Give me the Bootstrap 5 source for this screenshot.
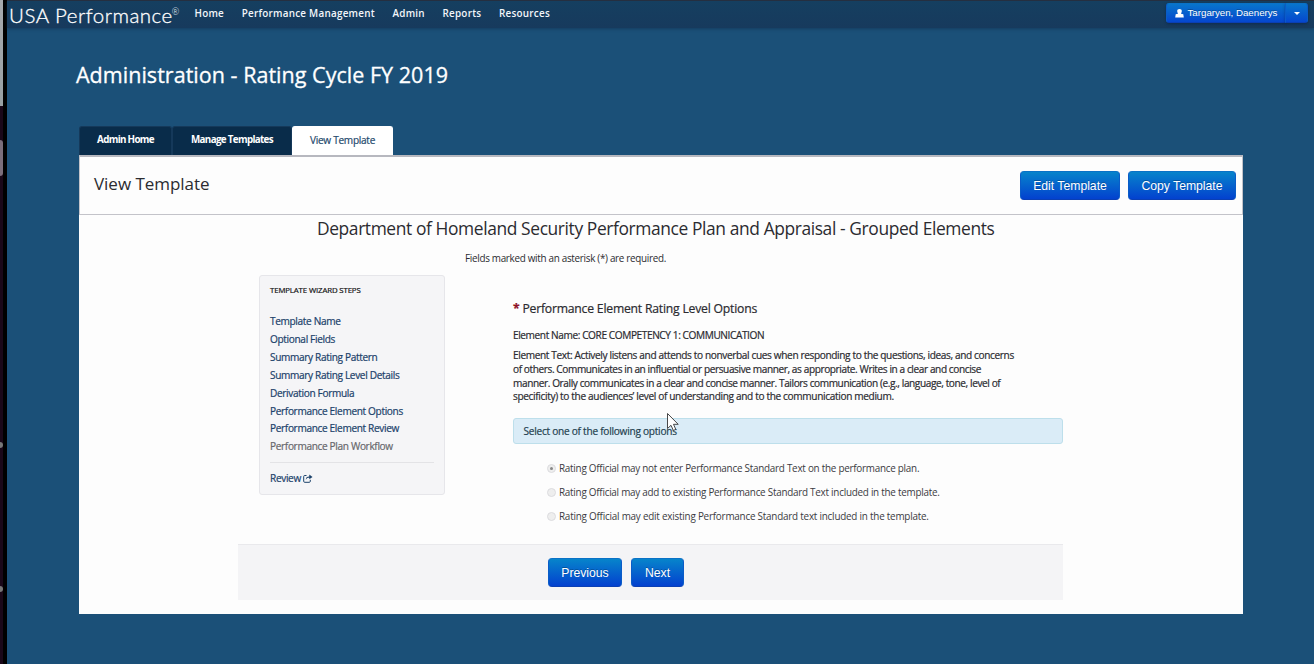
<!DOCTYPE html>
<html lang="en">
<head>
<meta charset="utf-8">
<meta name="viewport" content="width=device-width, initial-scale=1">
<title>USA Performance - View Template</title>
<link href="https://cdn.jsdelivr.net/npm/bootstrap@5.3.0/dist/css/bootstrap.min.css" rel="stylesheet">
<style>
body{font-family:"Open Sans",sans-serif;font-size:10.1px;font-weight:500;line-height:14px;color:#2b2b30;background:#1b5078;height:664px;overflow:hidden;white-space:nowrap}
.edge{width:7px;background:#000;padding-right:4px}
.edge-strip{background:#1a0819;height:664px}
.edge-top{height:106px;background:linear-gradient(#a6a9ad,#98a0a3)}
.edge-thumb{height:36px;margin-top:34px;background:#7b6e7b;border-radius:0 3px 3px 0}
.edge-dot{width:3px;height:6px;background:#777;border-radius:0 3px 3px 0}
.topbar{height:28px;padding:0 6px 0 2px;background:linear-gradient(#153f60,#173a5d);border-top:1px solid #252f40;box-shadow:0 1px 3px rgba(15,45,75,.55)}
.brand{font:300 20.5px/28px Lato,sans-serif;letter-spacing:.5px;color:#fff;width:185.5px;-webkit-text-stroke:.3px #fff}
.brand sup{font-size:9px;top:-8px;letter-spacing:0;margin-left:-1px;-webkit-text-stroke:0}
.menu{gap:17.6px}
.menu a{color:#f3f6fa;font-size:9.9px;font-weight:600;letter-spacing:.25px;text-decoration:none;line-height:24px}
.btn-app{font:12.2px/27px "Liberation Sans",Arial,sans-serif;color:#fff;height:29px;padding:1px 0 0;border:1px solid #0a5cc8;border-top-color:#0a72c6;border-bottom-color:#0a3fb4;border-radius:4px;background:linear-gradient(#0784cb,#0341cf);text-shadow:0 -1px 0 rgba(0,0,0,.25)}
.btn-user{height:20px;font-size:9.7px;line-height:18px;padding:0;border-radius:3px;background:linear-gradient(#0875cb,#0547cf);box-shadow:0 1px 3px rgba(0,20,60,.4)}
.caret{border:3px solid transparent;border-top-color:#fff;border-bottom:0}
.workspace{width:1164px;margin-left:72px}
h1{font-size:21.5px;font-weight:500;line-height:30px;color:#fff;margin:32px 0 0 -3px;letter-spacing:.03px;-webkit-text-stroke:.3px #fff}
.tabs{height:29px;margin-top:36px}
.tabs a{height:29px;line-height:26px;text-align:center;text-decoration:none;color:#fff;background:#092c4a;font-size:9.8px;font-weight:700;letter-spacing:-.66px;border-radius:3px 3px 0 0;border:1px solid #15395a;border-bottom:0}
.tabs a.current{background:#fff;border-color:#fff;color:#24496d;font-size:10.1px;font-weight:500;letter-spacing:-.29px;-webkit-text-stroke:.2px}
.panel{height:459px;background:#fdfdfd}
.panel-head{height:60px;padding:0 6px 0 14px;border:1px solid #c3c3c9;border-top:2px solid #b7b8bf}
.panel-head h2{font-size:17px;font-weight:400;line-height:24px;margin:0 0 3px;letter-spacing:-.03px}
.doc-title{font-size:17.4px;font-weight:400;line-height:26px;letter-spacing:-.39px;margin:0 0 0 238px}
.required-note{font-size:9.9px;font-weight:400;letter-spacing:-.3px;margin:10px 0 1px 386px}
.wizard{width:186px;height:220px;margin-left:180px;padding:7px 10px 0;background:#f5f5f7;border:1px solid #e6e6ea;border-radius:3px;letter-spacing:-.345px;-webkit-text-stroke:.2px}
.wizard h3{font-size:7.8px;font-weight:500;line-height:14px;letter-spacing:-.12px;margin:0 0 16px;color:#111}
.wizard a{display:block;line-height:17.9px;color:#1b416a;text-decoration:none}
.wizard a.muted{color:#67676c}
.wizard hr{margin:6px 0 7px;border-color:#c8c8ce;opacity:.4}
.element{width:550px;margin-left:68px;padding-top:24px;-webkit-text-stroke:.2px}
.element h4{font-size:12.2px;font-weight:500;line-height:19px;letter-spacing:-.21px;margin:0 0 10px}
.element h4 b{color:#8e1026}
.el-name{margin:0 0 7px;letter-spacing:-.4px}
.el-text{margin:0 0 14px;line-height:13.8px}
.el-text span{display:block;letter-spacing:-.368px}
.el-text span:nth-child(2),.el-text span:nth-child(3){letter-spacing:-.407px}
.el-text span:nth-child(4){letter-spacing:-.348px}
.prompt{position:relative;height:26px;line-height:24px;padding:0 9.5px;margin:0;background:#daecf7;border:1px solid #bddfeb;border-radius:3px;color:#24414f;letter-spacing:-.25px}
.pointer{position:absolute;left:152px;top:-7px}
.choices{margin:12px 0 0 34px;font-size:9.9px;font-weight:400;letter-spacing:-.25px;-webkit-text-stroke:0}
.choices label{height:24px;color:#3b3b42}
.choices label:nth-child(3){letter-spacing:-.22px}
.choices .form-check-input{width:9px;height:9px;margin:0 3px 0 0;background:#eee;border:1px solid #dcdcdf;opacity:1;display:flex;align-items:center;justify-content:center}
.choices .form-check-input:checked::after{content:"";width:3px;height:3px;border-radius:50%;background:#888}
.actions{width:825px;height:56px;margin:0 0 0 159px;padding:13px 0 0 310px;background:#f4f4f6;border-top:1px solid #e9e9ec}
</style>
</head>
<body class="d-flex">
<aside class="edge flex-shrink-0"><div class="edge-strip"><div class="edge-top"></div><div class="edge-thumb"></div><div class="edge-dot" style="margin-top:266px"></div><div class="edge-dot" style="margin-top:138px"></div></div></aside>
<div class="flex-grow-1">
<header class="topbar d-flex align-items-start">
  <div class="brand">USA Performance<sup>®</sup></div>
  <nav class="menu d-flex flex-grow-1"><a href="#">Home</a><a href="#">Performance Management</a><a href="#">Admin</a><a href="#">Reports</a><a href="#">Resources</a></nav>
  <div class="btn-group" style="margin-top:2px">
    <button class="btn btn-app btn-user d-flex align-items-center justify-content-center" style="width:120px" type="button"><svg width="9" height="9" viewBox="0 0 9 9" fill="#fff" class="me-1"><path d="M4.500 0C6 0 6.900.9 6.800 2.200 6.700 3.400 6.100 4 6 4.700L8.300 5.300 8.800 8.500H.2L.7 5.300 3 4.700C2.900 4 2.300 3.400 2.200 2.200 2.100.9 3 0 4.500 0Z"/></svg>Targaryen, Daenerys</button>
    <button class="btn btn-app btn-user d-flex align-items-center justify-content-center" style="width:23px" type="button" aria-label="Account menu"><i class="caret"></i></button>
  </div>
</header>
<main class="workspace">
  <h1>Administration - Rating Cycle FY 2019</h1>
  <nav class="tabs d-flex"><a href="#" style="width:93px">Admin Home</a><a href="#" style="width:120px">Manage Templates</a><a href="#" class="current" style="width:101px">View Template</a></nav>
  <section class="panel">
    <div class="panel-head d-flex align-items-center justify-content-between">
      <h2>View Template</h2>
      <div class="d-flex gap-2"><button class="btn btn-app" style="width:100px" type="button">Edit Template</button><button class="btn btn-app" style="width:108px" type="button">Copy Template</button></div>
    </div>
    <h2 class="doc-title">Department of Homeland Security Performance Plan and Appraisal - Grouped Elements</h2>
    <p class="required-note">Fields marked with an asterisk (*) are required.</p>
    <div class="d-flex align-items-start" style="height:278px;padding-top:9px">
      <aside class="wizard flex-shrink-0">
        <h3>TEMPLATE WIZARD STEPS</h3>
        <a href="#">Template Name</a><a href="#">Optional Fields</a><a href="#">Summary Rating Pattern</a><a href="#">Summary Rating Level Details</a><a href="#">Derivation Formula</a><a href="#">Performance Element Options</a><a href="#">Performance Element Review</a><a href="#" class="muted">Performance Plan Workflow</a>
        <hr>
        <a href="#">Review <svg width="10" height="9" viewBox="0 0 10 9" fill="none" stroke="#1b416a" style="margin:-2px 0 0 0"><path d="M3.500 1.500H1.700Q.7 1.500.7 2.500V7.300Q.7 8.300 1.700 8.300H6.300Q7.300 8.300 7.300 7.300V5.800"/><path d="M2.800 6C2.700 3.500 4 2.500 6.300 2.500V.6L9.500 3 6.300 5.300V3.800C4.500 3.700 3.500 4.300 2.800 6Z" fill="#1b416a" stroke="none"/></svg></a>
      </aside>
      <div class="element">
        <h4><b>*</b> Performance Element Rating Level Options</h4>
        <p class="el-name">Element Name: CORE COMPETENCY 1: COMMUNICATION</p>
        <p class="el-text"><span>Element Text: Actively listens and attends to nonverbal cues when responding to the questions, ideas, and concerns</span><span>of others. Communicates in an influential or persuasive manner, as appropriate. Writes in a clear and concise</span><span>manner. Orally communicates in a clear and concise manner. Tailors communication (e.g., language, tone, level of</span><span>specificity) to the audiences’ level of understanding and to the communication medium.</span></p>
        <div class="prompt">Select one of the following options
          <svg class="pointer" width="14" height="20" viewBox="0 0 14 20"><path d="M1.500 1.500V16.500L5 13.300 7.400 18.500 9.800 17.400 7.500 12.300H12.200Z" fill="#fff" stroke="#333" stroke-width=".9"/></svg>
        </div>
        <div class="choices">
          <label class="d-flex align-items-center"><input class="form-check-input" type="radio" name="standard" checked>Rating Official may not enter Performance Standard Text on the performance plan.</label>
          <label class="d-flex align-items-center"><input class="form-check-input" type="radio" name="standard">Rating Official may add to existing Performance Standard Text included in the template.</label>
          <label class="d-flex align-items-center"><input class="form-check-input" type="radio" name="standard">Rating Official may edit existing Performance Standard text included in the template.</label>
        </div>
      </div>
    </div>
    <div class="actions d-flex align-items-start"><button class="btn btn-app" style="width:74px;margin-right:9px" type="button">Previous</button><button class="btn btn-app" style="width:53px" type="button">Next</button></div>
  </section>
</main>
</div>
<script src="https://cdn.jsdelivr.net/npm/bootstrap@5.3.0/dist/js/bootstrap.bundle.min.js"></script>
</body>
</html>
